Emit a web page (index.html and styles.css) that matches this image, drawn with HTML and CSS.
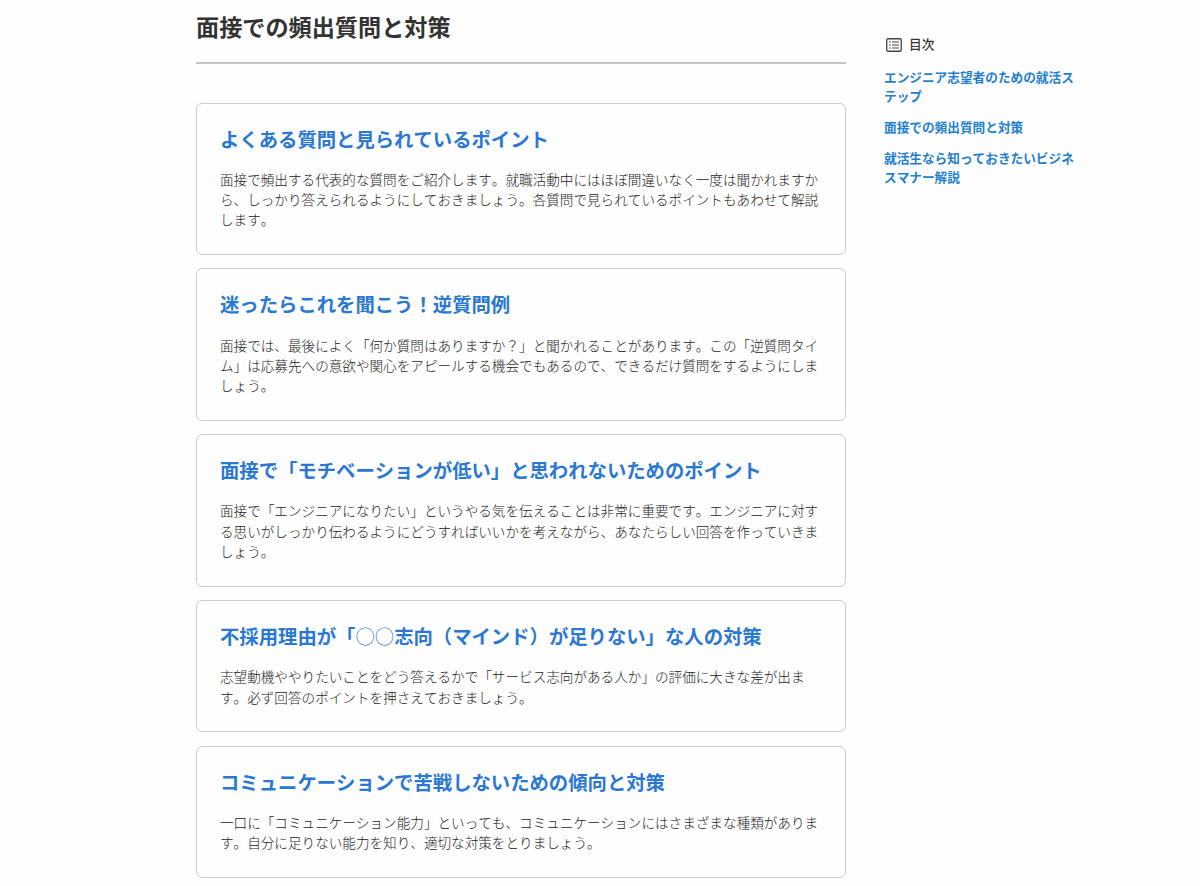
FILE: index.html
```html
<!DOCTYPE html>
<html lang="ja">
<head>
    <meta charset="UTF-8">
    <meta name="viewport" content="width=device-width, initial-scale=1.0">
    <title>面接での頻出質問と対策</title>
    <link rel="stylesheet" href="styles.css">
</head>
<body>
    <div class="container">
        <main class="main">
            <h1 class="page-title">面接での頻出質問と対策</h1>
            <div class="card-list">
                <article class="card">
                    <h2><a href="#">よくある質問と見られているポイント</a></h2>
                    <p>面接で頻出する代表的な質問をご紹介します。就職活動中にはほぼ間違いなく一度は聞かれますから、しっかり答えられるようにしておきましょう。各質問で見られているポイントもあわせて解説します。</p>
                </article>
                <article class="card">
                    <h2><a href="#">迷ったらこれを聞こう！逆質問例</a></h2>
                    <p>面接では、最後によく「何か質問はありますか？」と聞かれることがあります。この「逆質問タイム」は応募先への意欲や関心をアピールする機会でもあるので、できるだけ質問をするようにしましょう。</p>
                </article>
                <article class="card">
                    <h2><a href="#">面接で「モチベーションが低い」と思われないためのポイント</a></h2>
                    <p>面接で「エンジニアになりたい」というやる気を伝えることは非常に重要です。エンジニアに対する思いがしっかり伝わるようにどうすればいいかを考えながら、あなたらしい回答を作っていきましょう。</p>
                </article>
                <article class="card">
                    <h2><a href="#">不採用理由が「<span class="circle">○○</span>志向（マインド）が足りない」な人の対策</a></h2>
                    <p>志望動機ややりたいことをどう答えるかで「サービス志向がある人か」の評価に大きな差が出ます。必ず回答のポイントを押さえておきましょう。</p>
                </article>
                <article class="card">
                    <h2><a href="#">コミュニケーションで苦戦しないための傾向と対策</a></h2>
                    <p>一口に「コミュニケーション能力」といっても、コミュニケーションにはさまざまな種類があります。自分に足りない能力を知り、適切な対策をとりましょう。</p>
                </article>
            </div>
        </main>
        <aside class="toc">
            <div class="toc-title">
                <svg class="toc-icon" viewBox="0 0 16 14" fill="none" stroke="#444">
                    <rect x="0.75" y="0.75" width="14.5" height="12.5" rx="1.2" stroke-width="1.3"/>
                    <path d="M3 4h1.6M3 7h1.6M3 10h1.6M6 4h7M6 7h7M6 10h7" stroke-width="1.2"/>
                </svg>
                <span>目次</span>
            </div>
            <ul>
                <li><a href="#">エンジニア志望者のための就活ステップ</a></li>
                <li><a href="#">面接での頻出質問と対策</a></li>
                <li><a href="#">就活生なら知っておきたいビジネスマナー解説</a></li>
            </ul>
        </aside>
    </div>
</body>
</html>
```

FILE: styles.css
```css
* {
    box-sizing: border-box;
}
body {
    margin: 0;
    background: #fefefe;
    color: #333;
    font-family: "Noto Sans CJK JP", sans-serif;
    font-kerning: none;
    text-spacing-trim: space-all;
    overflow: hidden;
}
h1, h2, p, ul {
    margin: 0;
    padding: 0;
}
a {
    color: #2b78d4;
    text-decoration: none;
}
.container {
    display: flex;
    gap: 38px;
    padding-left: 196px;
}
.main {
    width: 650px;
}
.page-title {
    height: 64px;
    padding-top: 9px;
    border-bottom: 2px solid #c4c4c4;
    font-size: 23.15px;
    line-height: 34px;
}
.card-list {
    display: flex;
    flex-direction: column;
    gap: 13.6px;
    padding-top: 38.6px;
}
.card {
    padding: 21px 23px 24.3px;
    border: 1px solid #ccc;
    border-radius: 6px;
}
.card h2 {
    margin-bottom: 16.1px;
    font-size: 19.35px;
    line-height: 28px;
    white-space: nowrap;
}
.card .circle {
    font-weight: 300;
}
.card p {
    color: #222;
    font-size: 13.6px;
    font-weight: 300;
    line-height: 20.3px;
}
.toc {
    width: 194px;
    padding-top: 34px;
    font-size: 12.67px;
    font-weight: bold;
    line-height: 19px;
}
.toc-title {
    display: flex;
    align-items: center;
    gap: 7px;
    margin-bottom: 14px;
    padding-left: 2px;
    font-weight: 500;
}
.toc-icon {
    width: 16px;
    height: 14px;
    margin-top: 3px;
}
.toc ul {
    display: flex;
    flex-direction: column;
    gap: 12px;
    list-style: none;
}
.toc a {
    color: #1f7fd0;
}
```
